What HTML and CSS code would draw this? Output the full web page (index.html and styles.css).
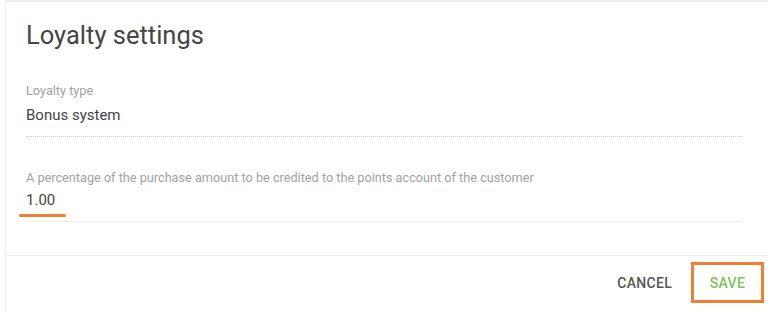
FILE: index.html
```html
<!DOCTYPE html>
<html lang="en">
<head>
    <meta charset="UTF-8">
    <meta name="viewport" content="width=device-width, initial-scale=1.0">
    <title>Loyalty settings</title>
    <link rel="stylesheet" href="styles.css">
</head>
<body>
    <div class="dialog">
        <div class="content">
            <h1 class="title">Loyalty settings</h1>

            <div class="field field-readonly">
                <div class="field-label">Loyalty type</div>
                <div class="field-value">Bonus system</div>
            </div>

            <div class="field field-input">
                <div class="field-label">A percentage of the purchase amount to be credited to the points account of the customer</div>
                <div class="field-value">1.00</div>
                <span class="mark-underline"></span>
            </div>
        </div>

        <div class="footer">
            <button class="btn btn-cancel">Cancel</button>
            <button class="btn btn-save">Save</button>
        </div>
    </div>
</body>
</html>
```

FILE: styles.css
```css
body {
    margin: 0;
    font-family: Roboto, "Liberation Sans", Arial, sans-serif;
    background-color: #fff;
    color: #444;
}
.dialog {
    margin-left: 5px;
    border-top: 2px solid #ececec;
    border-left: 1px solid #f0f0f0;
    height: 310px;
    display: flex;
    flex-direction: column;
}
.content {
    height: 253px;
    padding: 0 26px 0 20px;
    box-sizing: border-box;
}
.title {
    margin: 0;
    padding-top: 17px;
    font-size: 25.5px;
    font-weight: 400;
    line-height: 32px;
    color: #454545;
}
.field {
    position: relative;
}
.field-label {
    font-size: 12.7px;
    color: #a2a2a2;
    line-height: 14px;
}
.field-value {
    font-size: 15px;
    color: #444;
    line-height: 20px;
}
.field-readonly {
    margin-top: 33px;
    padding-bottom: 11px;
    border-bottom: 1px dotted #cfcfcf;
}
.field-readonly .field-value {
    margin-top: 7px;
}
.field-input {
    margin-top: 34px;
    padding-bottom: 11px;
    border-bottom: 1px solid #ececec;
}
.field-input .field-value {
    margin-top: 5px;
}
.mark-underline {
    position: absolute;
    left: -7px;
    bottom: 4px;
    width: 47px;
    height: 3px;
    border-radius: 2px;
    background-color: #f07f2f;
}
.footer {
    border-top: 1px solid #ededed;
    flex: 1;
    display: flex;
    justify-content: flex-end;
    align-items: flex-start;
    padding: 6px 4px 0 0;
}
.btn {
    font-family: Roboto, "Liberation Sans", Arial, sans-serif;
    background: none;
    border: none;
    text-transform: uppercase;
    font-size: 14px;
    font-weight: 500;
    letter-spacing: 0.3px;
    height: 41px;
    cursor: pointer;
}
.btn-cancel {
    color: #555;
    padding: 0 14px;
    margin-right: 5px;
}
.btn-save {
    color: #7cc35a;
    width: 73px;
    border: 3px solid #f07f2f;
}
```
